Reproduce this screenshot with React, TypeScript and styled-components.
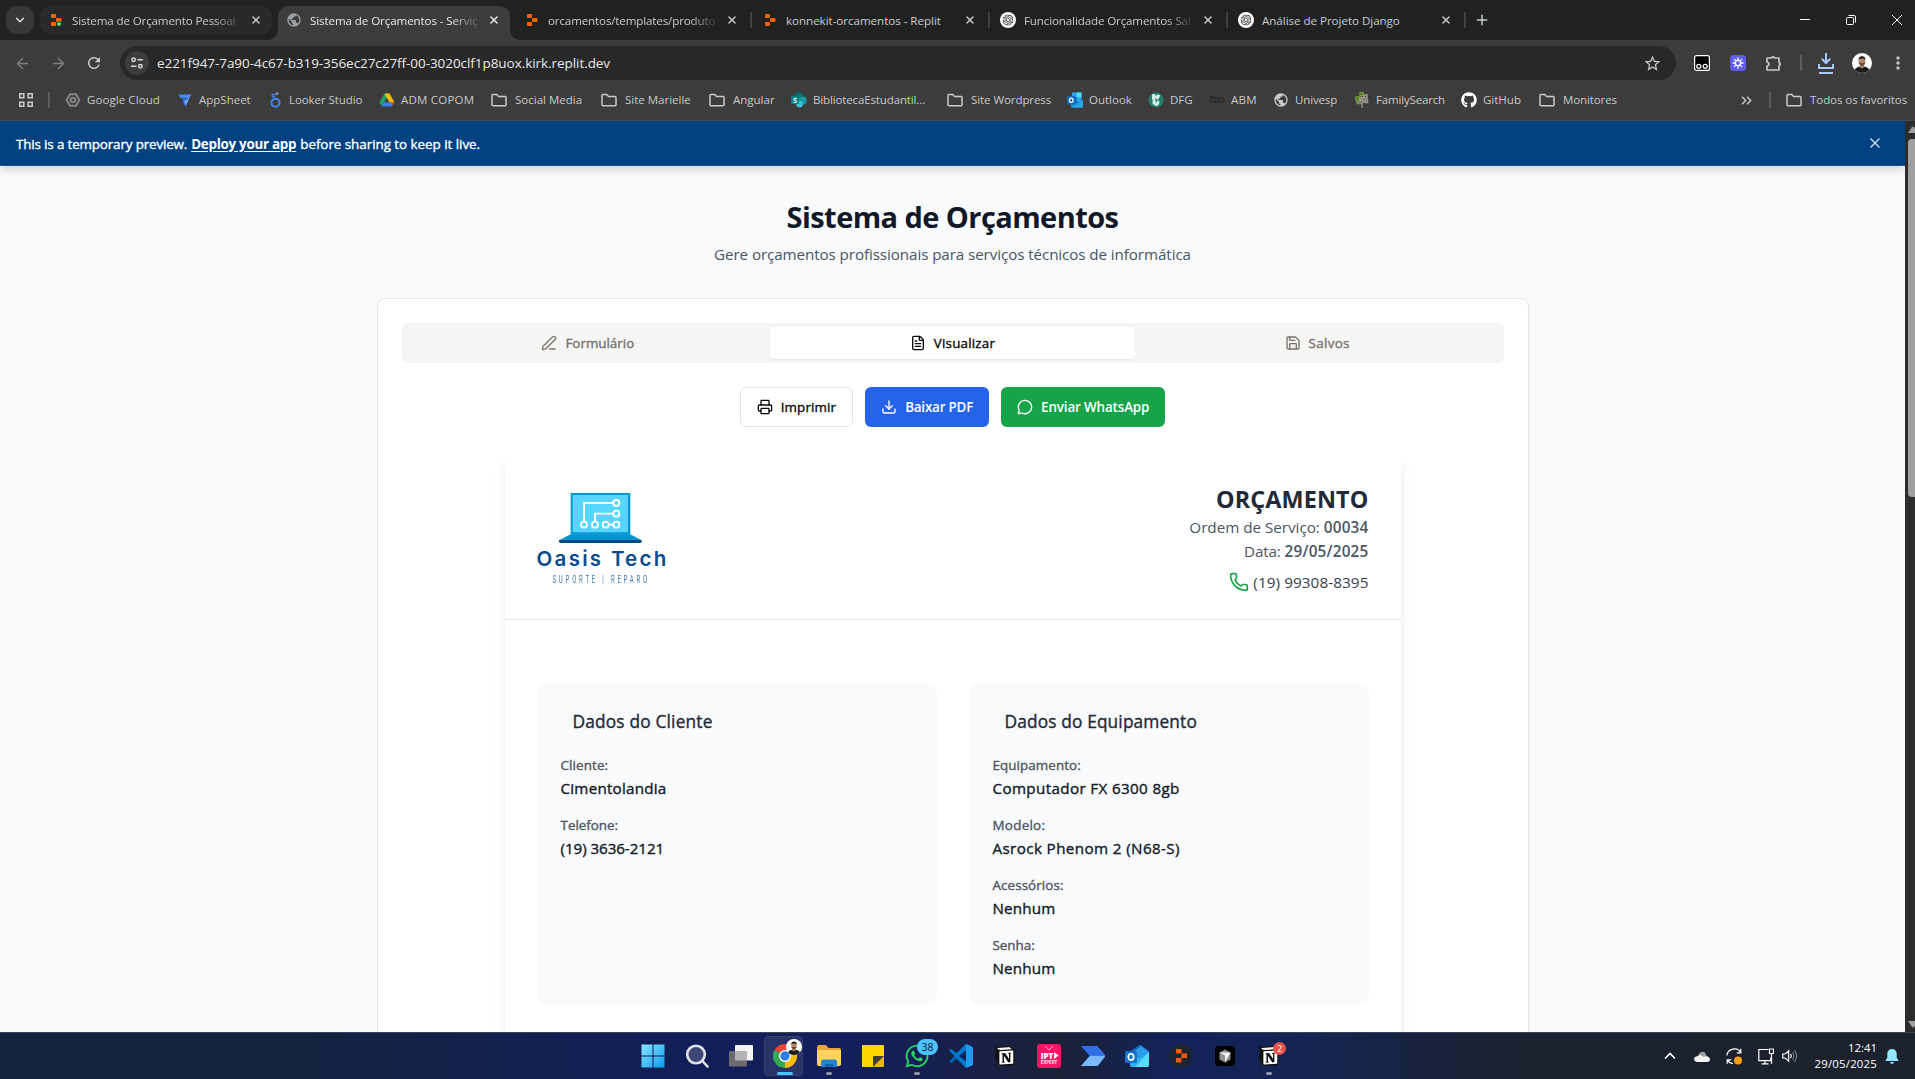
import React, { ReactNode, useLayoutEffect, useRef, useState } from "react";
import styled, { createGlobalStyle, css } from "styled-components";
import {
  ArrowLeft,
  ArrowRight,
  ChevronDown,
  Download,
  FileText,
  MessageCircle,
  PenLine,
  Phone,
  Plus,
  Printer,
  Save,
  X,
} from "lucide-react";
import { FaGithub, FaWhatsapp } from "react-icons/fa";
import { MdMoreVert, MdPublic, MdRefresh, MdStarBorder } from "react-icons/md";
import { SiNotion, SiOpenai } from "react-icons/si";

const GlobalStyle = createGlobalStyle`
  * { box-sizing: border-box; }
  body {
    margin: 0;
    overflow: hidden;
    font-family: "Open Sans", "Noto Sans", sans-serif;
    background: #202222;
  }
  h1, h2, h3, p { margin: 0; font-weight: inherit; font-size: inherit; }
  svg { display: block; flex: none; }
`;

/* A weight between regular and semibold. */
const mediumWeight = css`
  font-weight: 400;
  -webkit-text-stroke: 0.35px currentColor;
  svg { -webkit-text-stroke: 0; }
`;

/* ---------- text that tracks to a given measure ---------- */

const TrackedText = styled.span<{ $underline?: boolean }>`
  display: inline-block;
  white-space: pre;
  flex: none;
  ${(p) =>
    p.$underline &&
    css`
      text-decoration: underline;
      text-underline-offset: 2px;
    `}
`;

function Tracked({ width, underline, children }: { width: number; underline?: boolean; children: string }) {
  const ref = useRef<HTMLSpanElement>(null);
  const [spacing, setSpacing] = useState(0);
  useLayoutEffect(() => {
    if (!ref.current) return;
    setSpacing((width - ref.current.offsetWidth) / children.length);
  }, [width, children]);
  return (
    <TrackedText ref={ref} $underline={underline} style={{ letterSpacing: `${spacing}px` }}>
      {children}
    </TrackedText>
  );
}

/* ---------- browser window ---------- */

const Screen = styled.div`
  width: 1915px;
  height: 1079px;
  display: flex;
  flex-direction: column;
  overflow: hidden;
`;

const TabStrip = styled.div`
  height: 40px;
  flex: none;
  display: flex;
  align-items: center;
  padding-left: 6px;
  background: #202222;
  color: #c9cbcb;
`;

const TabSearch = styled.div`
  width: 28px;
  height: 28px;
  margin-right: 6px;
  border-radius: 10px;
  background: #363737;
  color: #e6e6e6;
  display: flex;
  align-items: center;
  justify-content: center;
`;

const Tab = styled.div<{ $state: "active" | "hovered" | "idle" }>`
  position: relative;
  width: 232px;
  height: 28px;
  margin-right: 6px;
  padding: 0 10px 0 8px;
  display: flex;
  align-items: center;
  gap: 8px;
  font-size: 11.6px;
  border-radius: 10px;
  ${(p) => p.$state === "hovered" && css`background: #282a2a;`}
  ${(p) =>
    p.$state === "active" &&
    css`
      height: 34px;
      align-self: flex-end;
      padding-bottom: 6px;
      border-radius: 10px 10px 0 0;
      background: #3c3c3c;
      color: #e8e8e8;
      &::before,
      &::after {
        content: "";
        position: absolute;
        bottom: 0;
        width: 10px;
        height: 10px;
      }
      &::before {
        left: -10px;
        background: radial-gradient(circle at 0 0, transparent 9.5px, #3c3c3c 10px);
      }
      &::after {
        right: -10px;
        background: radial-gradient(circle at 100% 0, transparent 9.5px, #3c3c3c 10px);
      }
    `}
`;

const TabTitle = styled.div<{ $fade: boolean }>`
  width: 168px;
  margin-right: -4px;
  flex: none;
  ${(p) => p.$fade && css`mask-image: linear-gradient(90deg, #000 142px, rgba(0, 0, 0, 0.12) 168px);`}
`;

const TabClose = styled(X)`
  margin-left: auto;
`;

const TabDivider = styled.div`
  width: 2px;
  height: 16px;
  margin: 0 2px 0 -4px;
  background: #3f4141;
`;

const NewTab = styled(Plus)`
  margin-left: 6px;
`;

const WindowControls = styled.div`
  margin: 0 -5px 0 auto;
  display: flex;
  color: #fff;
`;

const WindowButton = styled.div`
  width: 46px;
  display: flex;
  justify-content: center;
`;

const Toolbar = styled.div`
  height: 46px;
  flex: none;
  display: flex;
  align-items: center;
  background: #3c3c3c;
  color: #c7c7c7;
`;

const NavButton = styled.div<{ $dim?: boolean }>`
  width: 36px;
  display: flex;
  justify-content: center;
  color: ${(p) => (p.$dim ? "#7f7f7f" : "#c7c7c7")};
  &:first-child { margin-left: 4px; }
`;

const AddressBar = styled.div`
  width: 1556px;
  height: 34px;
  margin-left: 8px;
  padding: 0 14px 0 5px;
  border-radius: 17px;
  background: #282828;
  display: flex;
  align-items: center;
  font-size: 13.5px;
  color: #e8e8e8;
`;

const SiteInfo = styled.div`
  width: 24px;
  height: 24px;
  margin-right: 8px;
  border-radius: 50%;
  background: #3c3c3c;
  display: flex;
  align-items: center;
  justify-content: center;
`;

const StarSlot = styled.div`
  margin-left: auto;
  color: #c7c7c7;
`;

const Extensions = styled.div`
  display: flex;
  align-items: center;
  padding-left: 8px;
`;

const ToolSlot = styled.div<{ $w?: number }>`
  width: ${(p) => p.$w ?? 36}px;
  display: flex;
  justify-content: center;
`;

const Rule = styled.div`
  width: 2px;
  height: 16px;
  background: #5c5c5c;
`;

const BookmarkBar = styled.div`
  height: 35px;
  flex: none;
  display: flex;
  align-items: center;
  padding: 0 8px 6px 19px;
  background: #3c3c3c;
  border-bottom: 1px solid #474747;
  font-size: 11.5px;
  line-height: 14px;
  color: #c9c9c9;
`;

const BookmarkRule = styled(Rule)`
  margin: 0 15px;
`;

const Bookmark = styled.div<{ $w: number; $gap?: number }>`
  width: ${(p) => p.$w}px;
  flex: none;
  display: flex;
  align-items: center;
  gap: ${(p) => p.$gap ?? 8}px;
`;

const Overflow = styled.div`
  margin: 0 2px 0 auto;
`;

/* ---------- preview page ---------- */

const Viewport = styled.div`
  flex: 1;
  min-height: 0;
  display: flex;
`;

const Page = styled.div`
  width: 1905px;
  overflow: hidden;
  background: #f8fafc;
`;

const Banner = styled.div`
  position: relative;
  height: 45px;
  padding: 1px 25px 0 16px;
  display: flex;
  align-items: center;
  gap: 4px;
  background: #004182;
  border-bottom: 1px solid #1a5288;
  box-shadow: 0 2px 10px rgba(0, 0, 0, 0.2);
  color: #fff;
  font-size: 13.4px;
  ${mediumWeight}
`;

const DeployLink = styled.a`
  font-weight: 700;
  -webkit-text-stroke: 0;
`;

const BannerClose = styled.div`
  margin-left: auto;
  padding-bottom: 2px;
  color: #d5e2ef;
`;

const Heading = styled.header`
  display: flex;
  flex-direction: column;
  align-items: center;
  padding-top: 33px;
`;

const Title = styled.h1`
  height: 36px;
  line-height: 36px;
  font-size: 29px;
  font-weight: 700;
  color: #111827;
`;

const Subtitle = styled.p`
  margin-top: 7px;
  height: 24px;
  line-height: 24px;
  font-size: 15.2px;
  color: #4b5563;
`;

const Card = styled.main`
  width: 1152px;
  height: 900px;
  margin: 32px auto 0;
  padding: 24px;
  border: 1px solid #e5e5e5;
  border-radius: 8px;
  background: #fff;
  box-shadow: 0 1px 2px rgba(0, 0, 0, 0.05);
`;

const TabList = styled.div`
  height: 40px;
  padding: 4px;
  display: grid;
  grid-template-columns: repeat(3, 1fr);
  border-radius: 6px;
  background: #f5f5f4;
`;

const TabTrigger = styled.div<{ $active?: boolean }>`
  display: flex;
  align-items: center;
  justify-content: center;
  gap: 8px;
  border-radius: 4px;
  font-size: 13.4px;
  color: #78716c;
  ${mediumWeight}
  ${(p) =>
    p.$active &&
    css`
      background: #fff;
      color: #0c0a09;
      box-shadow: 0 1px 2px rgba(0, 0, 0, 0.06);
    `}
`;

const Actions = styled.div`
  margin: 24px 0;
  display: flex;
  justify-content: center;
  gap: 12px;
`;

const ActionButton = styled.button<{ $tone?: string }>`
  height: 40px;
  padding: 0 16px;
  display: flex;
  align-items: center;
  gap: 8px;
  border: ${(p) => (p.$tone ? "none" : "1px solid #e5e5e5")};
  border-radius: 6px;
  background: ${(p) => p.$tone ?? "#fff"};
  color: ${(p) => (p.$tone ? "#fff" : "#0c0a09")};
  font-family: inherit;
  font-size: 13.4px;
  ${(p) => (p.$tone ? css`font-weight: 600;` : mediumWeight)}
`;

const Sheet = styled.section`
  width: 896px;
  height: 800px;
  margin: 0 auto;
  background: #fff;
  box-shadow: 0 10px 15px -3px rgba(0, 0, 0, 0.1), 0 4px 6px -4px rgba(0, 0, 0, 0.1);
`;

const SheetHeader = styled.div`
  height: 169px;
  padding: 32px;
  display: flex;
  justify-content: space-between;
  border-bottom: 1px solid #e5e7eb;
`;

const Brand = styled.div`
  width: 129px;
  padding-top: 10px;
  display: flex;
  flex-direction: column;
  align-items: center;
  > svg { align-self: flex-start; margin-left: 22px; }
`;

const BrandName = styled.div`
  align-self: flex-start;
  margin-top: 3px;
  height: 26px;
  line-height: 26px;
  font-family: Inter, "Open Sans", sans-serif;
  font-size: 20.5px;
  font-weight: 600;
  color: #074a8f;
`;

const BrandTagline = styled.div`
  margin-top: 2px;
  height: 12px;
  line-height: 12px;
  font-family: Roboto, sans-serif;
  font-size: 10px;
  color: #3f78b0;
  transform: scaleX(0.6);
`;

const OrderInfo = styled.div`
  display: flex;
  flex-direction: column;
  align-items: flex-end;
  font-size: 15.3px;
  line-height: 24px;
  color: #4b5563;
`;

const OrderTitle = styled.h2`
  line-height: 32px;
  font-size: 23.4px;
  font-weight: 700;
  color: #1f2937;
`;

const OrderLine = styled.p`
  display: flex;
  gap: 4px;
  height: 24px;
`;

const OrderValue = styled.span`
  font-weight: 600;
`;

const PhoneLine = styled(OrderLine)`
  margin-top: 8px;
  line-height: 23px;
  color: #374151;
  svg { margin-top: 1px; color: #16a34a; }
`;

const Details = styled.div`
  padding: 64px 32px 0;
  display: grid;
  grid-template-columns: 1fr 1fr;
  gap: 32px;
`;

const DetailCard = styled.div`
  height: 320px;
  padding: 24px;
  border-radius: 8px;
  background: #f9fafb;
`;

const DetailTitle = styled.h3`
  height: 28px;
  line-height: 28px;
  margin-bottom: 16px;
  padding-left: 12px;
  font-size: 17.3px;
  color: #1f2937;
  ${mediumWeight}
`;

const Field = styled.div`
  height: 60px;
`;

const FieldLabel = styled.div`
  height: 24px;
  line-height: 27px;
  font-size: 13.4px;
  color: #4b5563;
  ${mediumWeight}
`;

const FieldValue = styled.div`
  height: 23px;
  line-height: 24px;
  font-size: 15.2px;
  color: #111827;
  ${mediumWeight}
`;

const Scrollbar = styled.div`
  width: 10px;
  height: 100%;
  padding: 5px 0 4px 3px;
  display: flex;
  flex-direction: column;
  background: #2c2c2c;
`;

const Thumb = styled.div`
  height: 358px;
  margin: 6px 0 auto;
  border-radius: 4px 0 0 4px;
  background: #9f9f9f;
`;

/* ---------- taskbar ---------- */

const Taskbar = styled.div`
  height: 47px;
  flex: none;
  display: flex;
  align-items: center;
  border-top: 1px solid #3a4257;
  background: linear-gradient(90deg, #14223f 0, #14223f 300px, #111f55 620px, #131f5c 850px, #1b2138 1060px, #11225a 1180px, #14244f 1320px, #1b212f 1520px, #1b222d 100%);
`;

const Apps = styled.div`
  margin-left: 631px;
  display: flex;
`;

const AppSlot = styled.div<{ $focused?: boolean }>`
  position: relative;
  width: 44px;
  height: 46px;
  display: flex;
  align-items: center;
  justify-content: center;
  ${(p) =>
    p.$focused &&
    css`
      &::before {
        content: "";
        position: absolute;
        inset: 3px 4px 3px 1px;
        border: 1px solid #34416c;
        border-radius: 4px;
        background: rgba(255, 255, 255, 0.09);
      }
    `}
  > svg { position: relative; }
`;

const Indicator = styled.div<{ $wide?: boolean }>`
  position: absolute;
  left: 50%;
  bottom: 4px;
  width: ${(p) => (p.$wide ? 16 : 6)}px;
  height: 3px;
  border-radius: 2px;
  transform: translateX(-50%);
  background: ${(p) => (p.$wide ? "#4cc2ff" : "#9298ab")};
`;

const Badge = styled.div<{ $alert?: boolean }>`
  position: absolute;
  top: ${(p) => (p.$alert ? 9 : 6)}px;
  right: ${(p) => (p.$alert ? 5 : 1)}px;
  width: ${(p) => (p.$alert ? 13 : 21)}px;
  height: ${(p) => (p.$alert ? 13 : 16)}px;
  border-radius: 8px;
  display: flex;
  align-items: center;
  justify-content: center;
  font-size: ${(p) => (p.$alert ? 9 : 10.5)}px;
  background: ${(p) => (p.$alert ? "#e5534b" : "#4cc2ff")};
  color: ${(p) => (p.$alert ? "#fff" : "#0b1530")};
`;

const AvatarBadge = styled.div`
  position: absolute;
  top: 6px;
  right: 5px;
`;

const Tray = styled.div`
  margin-left: auto;
  padding-right: 16px;
  display: flex;
  align-items: center;
  color: #fff;
`;

const TrayIcon = styled.div<{ $w: number }>`
  width: ${(p) => p.$w}px;
  display: flex;
  justify-content: center;
`;

const Clock = styled.div`
  width: 79px;
  margin-right: 8px;
  padding-bottom: 1px;
  display: flex;
  flex-direction: column;
  align-items: flex-end;
  font-size: 11.4px;
  line-height: 16px;
`;

/* ---------- drawings ---------- */

const ReplitMark = ({ live = false, size = 16 }: { live?: boolean; size?: number }) => (
  <svg width={size} height={size} viewBox="0 0 16 16">
    <rect x="3" y="2" width="5" height="4" rx="1" fill="#f26207" />
    <rect x="8" y="6" width="5.5" height="4" rx="1" fill="#f26207" />
    <rect x="3" y="10" width="5" height="4" rx="1" fill="#f26207" />
    {live && <circle cx="11" cy="12" r="2.3" fill="#5fe07a" stroke="#282a2a" strokeWidth=".8" />}
  </svg>
);

const OpenAiMark = () => (
  <svg width="16" height="16" viewBox="0 0 16 16">
    <circle cx="8" cy="8" r="8" fill="#fff" />
    <SiOpenai x="2.5" y="2.5" size={11} color="#222" />
  </svg>
);

const Folder = () => (
  <svg width="16" height="14" viewBox="0 0 16 14" fill="none" stroke="#c9c9c9" strokeWidth="1.5">
    <path d="M1 12V2.4c0-.5.3-.8.8-.8h4l1.7 1.8h6.7c.5 0 .8.3.8.8V12c0 .4-.3.7-.8.7H1.8c-.5 0-.8-.3-.8-.7z" />
  </svg>
);

const AppsGrid = () => (
  <svg width="14" height="14" viewBox="0 0 14 14" fill="none" stroke="#c9c9c9" strokeWidth="1.6">
    <path d="M.8.8h4v4h-4zM9.2.8h4v4h-4zM.8 9.2h4v4h-4zM9.2 9.2h4v4h-4z" />
  </svg>
);

const Person = ({ size }: { size: number }) => (
  <svg width={size} height={size} viewBox="0 0 20 20">
    <defs>
      <clipPath id={`person${size}`}>
        <circle cx="10" cy="10" r="10" />
      </clipPath>
    </defs>
    <g clipPath={`url(#person${size})`}>
      <rect width="20" height="20" fill="#fff" />
      <path d="M2 20c0-5 3.500-6.500 8-6.500s8 1.500 8 6.500z" fill="#17191d" />
      <path d="M8 11h4v3.500l-2 1-2-1z" fill="#a97a5f" />
      <ellipse cx="10" cy="8" rx="3.400" ry="4.400" fill="#b98868" />
      <path d="M6.600 7c-.5-5 7.300-5 6.800 0-.6-2-6.200-2-6.800 0z" fill="#1d1816" />
      <path d="M6.700 9c.3 5 6.300 5 6.600 0-1 1.500-5.600 1.500-6.600 0z" fill="#6b4a3a" />
    </g>
  </svg>
);

const SiteControls = () => (
  <svg width="14" height="14" viewBox="0 0 14 14" fill="none" stroke="#d6d6d6" strokeWidth="1.5">
    <circle cx="3.600" cy="3.800" r="1.700" />
    <path d="M7.500 3.800H13M1 10.200h5.500" />
    <circle cx="10.400" cy="10.200" r="1.700" />
  </svg>
);

const PuzzleMark = () => (
  <svg width="18" height="18" viewBox="0 0 18 18">
    <path
      d="M2 4h4.300a2 2 0 0 1 3.400 0H14v4.300a2 2 0 0 1 0 3.400V16H2v-4q2-.3 2-2T2 8z"
      fill="none"
      stroke="#c7c7c7"
      strokeWidth="1.700"
      strokeLinejoin="round"
    />
    <path d="M6.300 4a1.700 1.700 0 0 1 3.400 0zM14 8.300a1.700 1.700 0 0 1 0 3.400z" fill="#c7c7c7" />
  </svg>
);

const CloudHex = () => (
  <svg width="16" height="16" viewBox="0 0 16 16" fill="none" stroke="#858585" strokeWidth="2">
    <path d="M5 2.200h6L14.300 8 11 13.800H5L1.700 8z" />
    <circle cx="8" cy="8" r="2.300" />
  </svg>
);

const AppSheetMark = () => (
  <svg width="16" height="16" viewBox="0 0 16 16">
    <path d="M1.500 2.500h13L12.300 6H3.500z" fill="#4a8af4" />
    <path d="M5 6.500h7.500L8 14.500z" fill="#2a6de0" />
    <path d="M7 9.500L12.600 5 9 14z" fill="#6ba4ff" />
  </svg>
);

const LookerMark = () => (
  <svg width="16" height="16" viewBox="0 0 16 16" fill="none" stroke="#4285f4">
    <circle cx="8.500" cy="10.800" r="4" strokeWidth="2" />
    <circle cx="6.500" cy="3.600" r="1.500" strokeWidth="1.200" />
    <circle cx="10" cy="1.600" r=".9" stroke="#9dbcf5" />
  </svg>
);

const DriveMark = () => (
  <svg width="16" height="16" viewBox="0 0 16 16">
    <path d="M5.500 1.500h5l-5.500 9L2.800 14.500.6 10.300z" fill="#1ea362" />
    <path d="M5.500 1.500h5l5 9h-5z" fill="#ffba00" />
    <path d="M5.200 10.200h10.200l-2.500 4.300H2.700z" fill="#3b7ded" />
    <path d="M12 10.200h3.400l-1.700 3z" fill="#e84335" />
  </svg>
);

const SharePointMark = () => (
  <svg width="16" height="16" viewBox="0 0 16 16">
    <circle cx="8" cy="4.800" r="4.500" fill="#036c70" />
    <circle cx="11.700" cy="8.500" r="4" fill="#1a9ba1" />
    <circle cx="8.500" cy="12.300" r="3.300" fill="#37c6d0" />
    <rect y="4" width="8" height="8" rx="1" fill="#038387" />
    <text x="4" y="10.800" fontSize="7.500" fontWeight="700" fill="#fff" textAnchor="middle">S</text>
  </svg>
);

const OutlookMark = ({ size = 16 }: { size?: number }) => (
  <svg width={size} height={size} viewBox="0 0 16 16">
    <path d="M5 .5h9.500V10H5z" fill="#28a8ea" />
    <path d="M9.700.5h4.800v4.800H9.700z" fill="#50d9ff" />
    <path d="M5 5.300h4.700V10H5z" fill="#0364b8" />
    <path d="M4 15.500V7.500l6 3.200 6-3.200v8z" fill="#1490df" />
    <path d="M4 15.500l12-7v7z" fill="#28a8ea" />
    <rect y="4" width="8.500" height="8.500" rx="1" fill="#0f6cbd" />
    <ellipse cx="4.250" cy="8.250" rx="1.900" ry="2.200" fill="none" stroke="#fff" strokeWidth="1.200" />
  </svg>
);

const OutlookNewMark = () => (
  <svg width="24" height="24" viewBox="0 0 24 24">
    <path d="M4 8L14 1q1-.7 2 0l8 6v6H4z" fill="#0f5fb8" />
    <path d="M8 8l8-6 8 6-9 7z" fill="#2c9be8" />
    <path d="M5 11l10 3 9-6v13q0 2-2 2H7q-2 0-2-2z" fill="#2fb4f2" />
    <path d="M24 8v13q0 2-2 2H10z" fill="#55dcf8" />
    <rect y="7" width="12" height="12" rx="1.500" fill="#1272d3" />
    <ellipse cx="6" cy="13" rx="2.700" ry="3.200" fill="none" stroke="#fff" strokeWidth="1.700" />
  </svg>
);

const DfgMark = () => (
  <svg width="16" height="16" viewBox="0 0 16 16">
    <circle cx="8" cy="8" r="7.500" fill="#257d70" />
    <path d="M4 2.500c2-1 3 0 4 1.500 1-1.500 3-2 4-.5 0 2-2 3-2 4.500 2 2 2 4-1 6-3-.5-5-2-4.500-4 .5-1 .5-2-.5-3z" fill="#d4eee8" />
    <path d="M7 6l3 2-2 3z" fill="#257d70" />
  </svg>
);

const AbmMark = () => (
  <svg width="16" height="12" viewBox="0 0 16 12" fill="none" stroke="#232323">
    <path d="M0 7l3-4h3v5H1.500M6 4h4v4H6M10 4h5v4h-3v2.500M1 3h3" />
  </svg>
);

const TreeMark = () => (
  <svg width="16" height="16" viewBox="0 0 16 16" fill="none" strokeWidth="1.500">
    <path d="M8 16c1-3-.5-5-3-6.500M8 15c0-3 1-6 3.500-7M8 12V5" stroke="#8a8272" />
    <path d="M6 .8h3v3H6zM2 5h3v3H2z" stroke="#6fa32c" />
    <path d="M10 3h3v3h-3zM11 8h2.500v2.500H11zM6 6h2.500v2.500H6z" stroke="#a29c90" />
    <path d="M3 9.500h2v2H3z" stroke="#7b8b55" />
  </svg>
);

const DownloadsMark = () => (
  <svg width="18" height="22" viewBox="0 0 18 22" fill="none" stroke="#a8c7fa" strokeWidth="2">
    <path d="M9 1v9.500M4.800 6.800L9 11l4.200-4.200M2 12v4h14v-4M2 21h14" />
  </svg>
);

const TamperMark = () => (
  <svg width="16" height="16" viewBox="0 0 16 16">
    <rect x=".6" y=".6" width="14.800" height="14.800" rx="2" fill="#000" stroke="#fff" strokeWidth="1.200" />
    <g fill="none" stroke="#fff" strokeWidth="1.300">
      <circle cx="4.800" cy="11.300" r="2" />
      <circle cx="11.200" cy="11.300" r="2" />
    </g>
  </svg>
);

const BurstMark = () => (
  <svg width="16" height="16" viewBox="0 0 16 16">
    <rect width="16" height="16" rx="3.500" fill="#615cf0" />
    <g stroke="#fff" strokeWidth="1.300">
      <circle cx="8" cy="8" r="2.600" fill="none" />
      <path d="M8 2.500v2.500M8 11v2.500M2.500 8H5M11 8h2.500M4.100 4.100l1.800 1.800M10.100 10.100l1.800 1.800M4.100 11.900l1.800-1.800M10.100 5.900l1.800-1.800" />
    </g>
  </svg>
);

const CircuitLaptop = () => (
  <svg width="83" height="50" viewBox="208 162 249 150">
    <path d="M243 162h179v125H243z" fill="#0797d3" />
    <path d="M249 168h166v112H249z" fill="#57d5ff" />
    <path d="M243 286h179l34 18H208z" fill="#0693cf" />
    <path d="M208 303h248v5q0 4-5 4H213q-5 0-5-4z" fill="#084887" />
    <g fill="none" stroke="#fff" strokeWidth="5.500">
      <path d="M283 248v-56h88M316 248v-24h55M357 257h14" />
      <circle cx="380" cy="192" r="9" />
      <circle cx="380" cy="224" r="9" />
      <circle cx="283" cy="257" r="9" />
      <circle cx="316" cy="257" r="9" />
      <circle cx="348" cy="257" r="9" />
      <circle cx="380" cy="257" r="9" />
    </g>
  </svg>
);

const WindowsMark = () => (
  <svg width="24" height="24" viewBox="0 0 24 24">
    <defs>
      <linearGradient id="win" x2="1" y2="1">
        <stop stopColor="#8be5ff" />
        <stop offset="1" stopColor="#0a9cf0" />
      </linearGradient>
    </defs>
    <path d="M.5.5h11v11H.5zM12.500.5h11v11h-11zM.5 12.500h11v11H.5zM12.500 12.500h11v11h-11z" fill="url(#win)" />
  </svg>
);

const SearchMark = () => (
  <svg width="24" height="24" viewBox="0 0 24 24" fill="none" stroke="#dfe1e8" strokeWidth="2.600">
    <circle cx="11" cy="10.500" r="8.800" fill="#3d4777" />
    <path d="M17.500 17l5 5.500" strokeLinecap="round" />
  </svg>
);

const TaskViewMark = () => (
  <svg width="24" height="24" viewBox="0 0 24 24">
    <rect x="6" y="1" width="18" height="15.500" rx="1" fill="#f3f3f3" />
    <rect y="7" width="18" height="15.500" rx="1" fill="#6c6c70" />
    <path d="M6 7h12v9.500H6z" fill="#b3b3b6" />
  </svg>
);

const ChromeMark = () => (
  <svg width="24" height="24" viewBox="0 0 24 24">
    <path d="M12 12L1.600 6A12 12 0 0 1 22.400 6z" fill="#ea4335" />
    <path d="M12 12L22.400 6A12 12 0 0 1 12 24z" fill="#fbbc05" />
    <path d="M12 12v12A12 12 0 0 1 1.600 6z" fill="#34a853" />
    <path d="M12 6h10.400L17 15l-5 9 0-9z" fill="#fbbc05" />
    <circle cx="12" cy="12" r="6" fill="#fff" />
    <circle cx="12" cy="12" r="4.700" fill="#2f7de9" />
  </svg>
);

const ExplorerMark = () => (
  <svg width="24" height="24" viewBox="0 0 24 24">
    <path d="M0 3q0-2 2-2h7l2.500 3H22q2 0 2 2v15H0z" fill="#e8a33d" />
    <path d="M0 6h24v14q0 2-2 2H2q-2 0-2-2z" fill="#ffd35c" />
    <path d="M4 23v-5q0-2.500 2.500-2.500h11Q20 15.500 20 18v5z" fill="#2083d5" />
    <path d="M8 20h8v3H8z" fill="#1664a8" />
  </svg>
);

const StickyMark = () => (
  <svg width="22" height="24" viewBox="0 0 22 24">
    <path d="M0 2q0-1 1-1h20q1 0 1 1v10L11 23H1q-1 0-1-1z" fill="#ffd702" />
    <path d="M11 23V13q0-1 1-1h10z" fill="#403c35" />
    <path d="M22 12v10q0 1-1 1H11z" fill="#e5b900" />
  </svg>
);

const CodeMark = () => (
  <svg width="24" height="24" viewBox="0 0 24 24">
    <path d="M17 0v24L7.500 14.800 2.300 19 0 17.800 17 0z" fill="#0065a9" />
    <path d="M17 24V0L7.500 9.200 2.300 5 0 6.200 17 24z" fill="#007acc" />
    <path d="M17 6.500v11L10 12z" fill="#12235a" />
    <path d="M17 0l6 2.500q1 .5 1 1.500v16q0 1-1 1.500L17 24z" fill="#1f9cf0" />
  </svg>
);

const IptvMark = () => (
  <svg width="24" height="24" viewBox="0 0 24 24">
    <rect width="24" height="24" rx="3" fill="#ff1468" />
    <path d="M8 2l4 4 4-4" fill="none" stroke="#ffb3cd" />
    <text x="10" y="14.500" fontSize="8" fontWeight="800" fill="#fff" textAnchor="middle">IPT</text>
    <path d="M17 8l4.500 3.500L17 15z" fill="#fff" />
    <text x="12" y="20" fontSize="4.500" fontWeight="700" fill="#ffe1eb" textAnchor="middle">EXPERT</text>
  </svg>
);

const FlowMark = () => (
  <svg width="24" height="24" viewBox="0 0 24 24">
    <path d="M0 2h14l5 10H9z" fill="#1c4fd0" />
    <path d="M14 2h2l8 9q.8 1 0 2l-7.500 9H0l8.500-10z" fill="#3f8cf5" />
    <path d="M0 2h15l8 9.500H8.500z" fill="#2f6de6" />
    <path d="M9 12h15l-7.500 10H0z" fill="#7cb8fb" />
  </svg>
);

const ReplitApp = () => (
  <svg width="24" height="24" viewBox="0 0 24 24">
    <circle cx="12" cy="12" r="12" fill="#1c2333" />
    <path d="M7 5h5.500v4.500H7zM12.500 9.500H18V14h-5.500zM7 14h5.500v4.500H7z" fill="#f95b0a" />
  </svg>
);

const CursorMark = () => (
  <svg width="20" height="20" viewBox="0 0 20 20">
    <rect width="20" height="20" rx="4" fill="#000" />
    <path d="M10 3.500l5.500 3v7L10 16.500l-5.500-3v-7z" fill="#8d8d8d" />
    <path d="M4.500 6.500h11L10 16.500V9.500z" fill="#f3f3f3" />
  </svg>
);

const NotionMark = () => (
  <svg width="20" height="22" viewBox="0 0 22 24">
    <path d="M2 2.500L16 1.500l5 4V21L5 22.500l-4-5z" fill="#fff" />
    <SiNotion x="0" y="1" size={22} color="#111" />
  </svg>
);

/* ---------- data ---------- */

type TabData = { title: string; width: number; icon: ReactNode; state: "active" | "hovered" | "idle"; fade?: boolean };

const tabs: TabData[] = [
  { title: "Sistema de Orçamento Pessoal", width: 163, icon: <ReplitMark live />, state: "hovered", fade: true },
  { title: "Sistema de Orçamentos - Serviç", width: 168, icon: <MdPublic size={16} color="#9aa0a6" />, state: "active", fade: true },
  { title: "orcamentos/templates/produto", width: 167, icon: <ReplitMark />, state: "idle", fade: true },
  { title: "konnekit-orcamentos - Replit", width: 155, icon: <ReplitMark />, state: "idle" },
  { title: "Funcionalidade Orçamentos Sal", width: 167, icon: <OpenAiMark />, state: "idle", fade: true },
  { title: "Análise de Projeto Django", width: 138, icon: <OpenAiMark />, state: "idle" },
];

type BookmarkData = { label: string; text: number; slot: number; icon: ReactNode; gap?: number };

const bookmarks: BookmarkData[] = [
  { label: "Google Cloud", text: 73, slot: 112, icon: <CloudHex />, gap: 6 },
  { label: "AppSheet", text: 52, slot: 90, icon: <AppSheetMark />, gap: 6 },
  { label: "Looker Studio", text: 73, slot: 112, icon: <LookerMark />, gap: 6 },
  { label: "ADM COPOM", text: 73, slot: 112, icon: <DriveMark />, gap: 6 },
  { label: "Social Media", text: 67, slot: 110, icon: <Folder /> },
  { label: "Site Marielle", text: 66, slot: 108, icon: <Folder /> },
  { label: "Angular", text: 42, slot: 82, icon: <Folder /> },
  { label: "BibliotecaEstudantil...", text: 112, slot: 156, icon: <SharePointMark />, gap: 6 },
  { label: "Site Wordpress", text: 80, slot: 120, icon: <Folder /> },
  { label: "Outlook", text: 43, slot: 81, icon: <OutlookMark />, gap: 6 },
  { label: "DFG", text: 23, slot: 61, icon: <DfgMark />, gap: 6 },
  { label: "ABM", text: 26, slot: 64, icon: <AbmMark />, gap: 6 },
  { label: "Univesp", text: 42, slot: 81, icon: <MdPublic size={16} />, gap: 6 },
  { label: "FamilySearch", text: 69, slot: 107, icon: <TreeMark />, gap: 6 },
  { label: "GitHub", text: 38, slot: 78, icon: <FaGithub size={16} color="#fff" />, gap: 6 },
  { label: "Monitores", text: 54, slot: 100, icon: <Folder /> },
];

type FieldData = { label: string; labelWidth: number; value: string; valueWidth: number };

const client: FieldData[] = [
  { label: "Cliente:", labelWidth: 48, value: "Cimentolandia", valueWidth: 106 },
  { label: "Telefone:", labelWidth: 58, value: "(19) 3636-2121", valueWidth: 104 },
];

const equipment: FieldData[] = [
  { label: "Equipamento:", labelWidth: 88, value: "Computador FX 6300 8gb", valueWidth: 187 },
  { label: "Modelo:", labelWidth: 53, value: "Asrock Phenom 2 (N68-S)", valueWidth: 187 },
  { label: "Acessórios:", labelWidth: 71, value: "Nenhum", valueWidth: 63 },
  { label: "Senha:", labelWidth: 42, value: "Nenhum", valueWidth: 63 },
];

/* ---------- composition ---------- */

function BrowserChrome() {
  return (
    <>
      <TabStrip>
        <TabSearch>
          <ChevronDown size={14} strokeWidth={2.4} />
        </TabSearch>
        {tabs.map((t) => (
          <React.Fragment key={t.title}>
            <Tab $state={t.state}>
              {t.icon}
              <TabTitle $fade={!!t.fade}>
                <Tracked width={t.width}>{t.title}</Tracked>
              </TabTitle>
              <TabClose size={12} strokeWidth={3} />
            </Tab>
            {t.state === "idle" && <TabDivider />}
          </React.Fragment>
        ))}
        <NewTab size={16} strokeWidth={2.2} />
        <WindowControls>
          <WindowButton>
            <svg width="10" height="10"><path d="M0 4.500h10" stroke="#fff" /></svg>
          </WindowButton>
          <WindowButton>
            <svg width="10" height="10" viewBox="0 0 10 10" fill="none" stroke="#fff">
              <rect x=".5" y="2.500" width="7" height="7" rx="1" />
              <path d="M2.500.5H8Q9.500.5 9.500 2v5.500" />
            </svg>
          </WindowButton>
          <WindowButton>
            <svg width="10" height="10" viewBox="0 0 10 10"><path d="M0 0l10 10M10 0L0 10" stroke="#fff" /></svg>
          </WindowButton>
        </WindowControls>
      </TabStrip>

      <Toolbar>
        <NavButton $dim><ArrowLeft size={17} strokeWidth={2} /></NavButton>
        <NavButton $dim><ArrowRight size={17} strokeWidth={2} /></NavButton>
        <NavButton><MdRefresh size={18} /></NavButton>
        <AddressBar>
          <SiteInfo><SiteControls /></SiteInfo>
          <Tracked width={453}>e221f947-7a90-4c67-b319-356ec27c27ff-00-3020clf1p8uox.kirk.replit.dev</Tracked>
          <StarSlot><MdStarBorder size={19} /></StarSlot>
        </AddressBar>
        <Extensions>
          <ToolSlot><TamperMark /></ToolSlot>
          <ToolSlot><BurstMark /></ToolSlot>
          <ToolSlot><PuzzleMark /></ToolSlot>
          <ToolSlot $w={18}><Rule /></ToolSlot>
          <ToolSlot $w={32}><DownloadsMark /></ToolSlot>
          <ToolSlot $w={40}><Person size={20} /></ToolSlot>
          <ToolSlot $w={32}><MdMoreVert size={20} /></ToolSlot>
        </Extensions>
      </Toolbar>

      <BookmarkBar>
        <AppsGrid />
        <BookmarkRule />
        {bookmarks.map((b) => (
          <Bookmark key={b.label} $w={b.slot} $gap={b.gap}>
            {b.icon}
            <Tracked width={b.text}>{b.label}</Tracked>
          </Bookmark>
        ))}
        <Overflow>
          <svg width="11" height="9" viewBox="0 0 11 9" fill="none" stroke="#c9c9c9" strokeWidth="1.500">
            <path d="M1 .8l3.700 3.700L1 8.200M6 .8l3.700 3.700L6 8.200" />
          </svg>
        </Overflow>
        <BookmarkRule />
        <Bookmark $w={121}>
          <Folder />
          <Tracked width={97}>Todos os favoritos</Tracked>
        </Bookmark>
      </BookmarkBar>
    </>
  );
}

function DetailBlock({ title, titleWidth, fields }: { title: string; titleWidth: number; fields: FieldData[] }) {
  return (
    <DetailCard>
      <DetailTitle><Tracked width={titleWidth}>{title}</Tracked></DetailTitle>
      {fields.map((f) => (
        <Field key={f.label}>
          <FieldLabel><Tracked width={f.labelWidth}>{f.label}</Tracked></FieldLabel>
          <FieldValue><Tracked width={f.valueWidth}>{f.value}</Tracked></FieldValue>
        </Field>
      ))}
    </DetailCard>
  );
}

function BudgetPage() {
  return (
    <Page>
      <Banner>
        <Tracked width={171}>This is a temporary preview.</Tracked>
        <DeployLink><Tracked width={105} underline>Deploy your app</Tracked></DeployLink>
        <Tracked width={180}>before sharing to keep it live.</Tracked>
        <BannerClose>
          <svg width="10" height="10" viewBox="0 0 10 10"><path d="M.5.5l9 9M9.500.5l-9 9" stroke="currentColor" strokeWidth="1.300" /></svg>
        </BannerClose>
      </Banner>
      <Heading>
        <Title><Tracked width={332}>Sistema de Orçamentos</Tracked></Title>
        <Subtitle><Tracked width={477}>Gere orçamentos profissionais para serviços técnicos de informática</Tracked></Subtitle>
      </Heading>
      <Card>
        <TabList>
          <TabTrigger><PenLine size={16} /><Tracked width={69}>Formulário</Tracked></TabTrigger>
          <TabTrigger $active><FileText size={16} /><Tracked width={61}>Visualizar</Tracked></TabTrigger>
          <TabTrigger><Save size={16} /><Tracked width={41}>Salvos</Tracked></TabTrigger>
        </TabList>
        <Actions>
          <ActionButton><Printer size={16} /><Tracked width={55}>Imprimir</Tracked></ActionButton>
          <ActionButton $tone="#2563eb"><Download size={16} /><Tracked width={68}>Baixar PDF</Tracked></ActionButton>
          <ActionButton $tone="#16a34a"><MessageCircle size={16} /><Tracked width={108}>Enviar WhatsApp</Tracked></ActionButton>
        </Actions>
        <Sheet>
          <SheetHeader>
            <Brand>
              <CircuitLaptop />
              <BrandName><Tracked width={132}>Oasis Tech</Tracked></BrandName>
              <BrandTagline><Tracked width={162}>SUPORTE | REPARO</Tracked></BrandTagline>
            </Brand>
            <OrderInfo>
              <OrderTitle><Tracked width={152}>ORÇAMENTO</Tracked></OrderTitle>
              <OrderLine><Tracked width={130}>Ordem de Serviço:</Tracked><OrderValue><Tracked width={45}>00034</Tracked></OrderValue></OrderLine>
              <OrderLine><Tracked width={37}>Data:</Tracked><OrderValue><Tracked width={84}>29/05/2025</Tracked></OrderValue></OrderLine>
              <PhoneLine><Phone size={20} /><Tracked width={115}>(19) 99308-8395</Tracked></PhoneLine>
            </OrderInfo>
          </SheetHeader>
          <Details>
            <DetailBlock title="Dados do Cliente" titleWidth={140} fields={client} />
            <DetailBlock title="Dados do Equipamento" titleWidth={192} fields={equipment} />
          </Details>
        </Sheet>
      </Card>
    </Page>
  );
}

function TaskbarRow() {
  return (
    <Taskbar>
      <Apps>
        <AppSlot><WindowsMark /></AppSlot>
        <AppSlot><SearchMark /></AppSlot>
        <AppSlot><TaskViewMark /></AppSlot>
        <AppSlot $focused><ChromeMark /><AvatarBadge><Person size={16} /></AvatarBadge><Indicator $wide /></AppSlot>
        <AppSlot><ExplorerMark /><Indicator /></AppSlot>
        <AppSlot><StickyMark /></AppSlot>
        <AppSlot><FaWhatsapp size={26} color="#25d366" /><Badge>38</Badge><Indicator /></AppSlot>
        <AppSlot><CodeMark /></AppSlot>
        <AppSlot><NotionMark /></AppSlot>
        <AppSlot><IptvMark /></AppSlot>
        <AppSlot><FlowMark /></AppSlot>
        <AppSlot><OutlookNewMark /></AppSlot>
        <AppSlot><ReplitApp /></AppSlot>
        <AppSlot><CursorMark /></AppSlot>
        <AppSlot><NotionMark /><Badge $alert>2</Badge><Indicator /></AppSlot>
      </Apps>
      <Tray>
        <TrayIcon $w={32}>
          <svg width="12" height="8" viewBox="0 0 12 8" fill="none" stroke="#fff" strokeWidth="1.600"><path d="M1 6.500l5-5 5 5" /></svg>
        </TrayIcon>
        <TrayIcon $w={32}>
          <svg width="16" height="11" viewBox="0 0 16 11">
            <path d="M4 7C3 2 10-2 12 3.500L13 7z" fill="#9c9ea2" />
            <path d="M3.500 11C-1 11-1 5 3.500 5.200 6 3 9 5 9.500 6c3-2 6.500 0 6.500 2.500 0 1.500-1 2.500-3 2.500z" fill="#f4f4f4" />
          </svg>
        </TrayIcon>
        <TrayIcon $w={32}>
          <svg width="16" height="17" viewBox="0 0 16 17" fill="none" stroke="#fff" strokeWidth="1.200">
            <path d="M1 7.500C1.500 0 12-1 14.500 4.500M14.800.8v4h-4M1.200 15.800v-4h4M1.500 12c1 2 3 3.300 5.500 3.500" />
            <circle cx="12" cy="12.500" r="4" fill="#ff9d0a" stroke="none" />
          </svg>
        </TrayIcon>
        <TrayIcon $w={32}>
          <svg width="16" height="17" viewBox="0 0 16 17" fill="none" stroke="#fff" strokeWidth="1.200">
            <path d="M10.500 1.500H.8v11.200h12V9.500M3.500 15.800h7M7 12.700v3M11.500 1h4v4.500h-4zM13.500 5.500v10.200" />
          </svg>
        </TrayIcon>
        <TrayIcon $w={16}>
          <svg width="16" height="14" viewBox="0 0 16 14" fill="none" stroke="#fff" strokeWidth="1.200">
            <path d="M.8 5h2.400l3.500-3.200v10.400L3.200 9H.8zM8.700 5q1.500 2 0 4" />
            <path d="M10.500 3.200q3 3.800 0 7.600M12.500 1.200q4.500 5.800 0 11.600" stroke="#6c737d" />
          </svg>
        </TrayIcon>
        <Clock>
          <Tracked width={29}>12:41</Tracked>
          <Tracked width={62}>29/05/2025</Tracked>
        </Clock>
        <svg width="14" height="15" viewBox="0 0 14 15" fill="#93e6fd">
          <path d="M7 0c-3 0-4.700 2-4.700 5v3.500L.3 12h13.400l-2-3.500V5C11.700 2 10 0 7 0zM5 13h4q-.5 2-2 2t-2-2z" />
        </svg>
      </Tray>
    </Taskbar>
  );
}

export default function App() {
  return (
    <Screen>
      <GlobalStyle />
      <BrowserChrome />
      <Viewport>
        <BudgetPage />
        <Scrollbar>
          <svg width="7" height="7" viewBox="0 0 7 7"><path d="M0 7l4-6q1-1 2 0l4 6z" fill="#9f9f9f" /></svg>
          <Thumb />
          <svg width="7" height="7" viewBox="0 0 7 7"><path d="M0 0l4 6q1 1 2 0l4-6z" fill="#9f9f9f" /></svg>
        </Scrollbar>
      </Viewport>
      <TaskbarRow />
    </Screen>
  );
}
